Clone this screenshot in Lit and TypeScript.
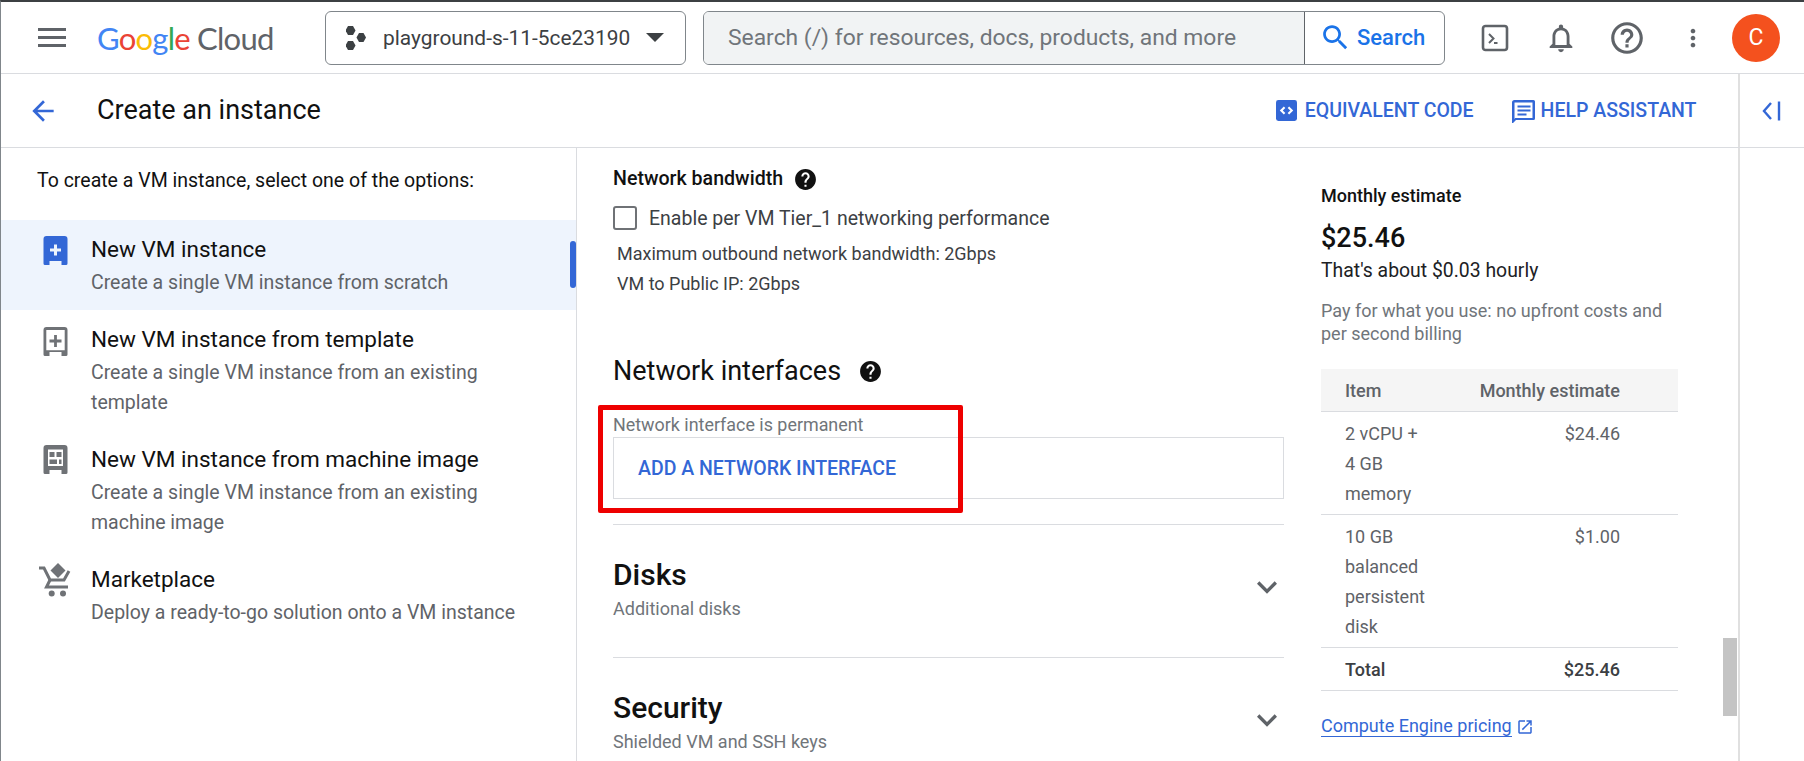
import { LitElement, html, css, svg } from "lit";
import { customElement } from "lit/decorators.js";

const icon = (d: string, size = 24) => html`<svg class="ico" width=${size} height=${size} viewBox="0 0 24 24" fill="currentColor"><path d=${d}></path></svg>`;

const HELP_FILLED = "M12 2C6.48 2 2 6.48 2 12s4.48 10 10 10 10-4.48 10-10S17.52 2 12 2zm1 17h-2v-2h2v2zm2.07-7.75l-.9.92C13.45 12.9 13 13.5 13 15h-2v-.5c0-1.1.45-2.1 1.17-2.83l1.24-1.26c.37-.36.59-.86.59-1.41 0-1.1-.9-2-2-2s-2 .9-2 2H8c0-2.21 1.79-4 4-4s4 1.79 4 4c0 .88-.36 1.68-.93 2.25z";
const CHEVRON = "M7.41 8.59L12 13.17l4.59-4.58L18 10l-6 6-6-6 1.41-1.41z";

// vm body shared by the three instance icons, legs at the bottom
const VM_BODY = "M3 0h18a3 3 0 0 1 3 3v24.500a1.500 1.500 0 0 1-1.500 1.500H18v-4H6v4H1.500A1.500 1.500 0 0 1 0 27.500V3a3 3 0 0 1 3-3z";
const vmFilled = svg`<g transform="translate(4.500 0)"><path fill-rule="evenodd" d="${VM_BODY}M10.500 8.500h3v4h4v3h-4v4h-3v-4h-4v-3h4z"></path></g>`;
const vmOutline = svg`<g transform="translate(4.500 0)"><path fill-rule="evenodd" d="${VM_BODY}M2.800 3v20.200h18.400V3zM10.600 8h2.800v4.600H18v2.800h-4.600V20h-2.800v-4.600H6v-2.800h4.600z"></path></g>`;
const vmImage = svg`<g transform="translate(4.500 0)"><path fill-rule="evenodd" d="${VM_BODY}M4.500 4.500v16.500h15V4.500z"></path><rect x="6" y="7" width="5" height="5"></rect><rect x="13" y="7" width="5" height="5"></rect><rect x="6" y="14.500" width="7.500" height="4.500"></rect><rect x="15.500" y="14.500" width="2.500" height="4.500"></rect></g>`;
const cart = svg`<path d="M19 0l7.500 7.500L19 15l-7.500-7.500z"></path><path d="M0 5h5l6 12h14l5-9" fill="none" stroke="currentColor" stroke-width="3"></path><path d="M11 17l-3.500 7H29" fill="none" stroke="currentColor" stroke-width="3"></path><circle cx="12.700" cy="30.500" r="3"></circle><circle cx="24" cy="30.500" r="3"></circle>`;

const OPTIONS = [
  { icon: vmFilled, title: "New VM instance", sub: ["Create a single VM instance from scratch"], active: true, top: 2 },
  { icon: vmOutline, title: "New VM instance from template", sub: ["Create a single VM instance from an existing", "template"], top: 3 },
  { icon: vmImage, title: "New VM instance from machine image", sub: ["Create a single VM instance from an existing", "machine image"], top: 1 },
  { icon: cart, title: "Marketplace", sub: ["Deploy a ready-to-go solution onto a VM instance"], top: -1 },
];

const COSTS = [
  { item: ["2 vCPU +", "4 GB", "memory"], price: "$24.46" },
  { item: ["10 GB", "balanced", "persistent", "disk"], price: "$1.00" },
];

@customElement("app-root")
export class AppRoot extends LitElement {
  static styles = css`
    :host {
      display: block;
      width: 1804px;
      height: 761px;
      overflow: hidden;
      background: #fff;
      font-family: Roboto, "Liberation Sans", sans-serif;
      color: #202124;
    }
    .page {
      height: 761px;
      box-sizing: border-box;
      border-left: 1.500px solid #80868b;
      border-top: 2px solid #3c4043;
      display: flex;
      flex-direction: column;
      overflow: hidden;
    }
    .ico { display: block; flex: none; }

    /* top bar */
    .topbar {
      height: 72px;
      flex: none;
      box-sizing: border-box;
      border-bottom: 1px solid #dadce0;
      display: flex;
      align-items: center;
      position: relative;
    }
    .menu { margin-left: 37px; color: #5f6368; }
    .logo {
      margin-left: 31px;
      width: 178px;
      font-family: Lato, sans-serif;
      font-size: 31px;
      letter-spacing: -0.750px;
      color: #5f6368;
      white-space: nowrap;
    }
    .logo .b { color: #4285f4; }
    .logo .r { color: #ea4335; }
    .logo .y { color: #fbbc05; }
    .logo .g { color: #34a853; }
    .project {
      margin-left: 50px;
      width: 361px;
      height: 54px;
      box-sizing: border-box;
      border: 1px solid #80868b;
      border-radius: 6px;
      display: flex;
      align-items: center;
      padding-left: 20px;
      font-size: 20.900px;
      color: #3c4043;
    }
    .project .name { margin-left: 17px; white-space: nowrap; }
    .caret {
      margin-left: 16px;
      width: 0;
      height: 0;
      border-left: 9px solid transparent;
      border-right: 9px solid transparent;
      border-top: 9px solid #3c4043;
    }
    .search {
      margin-left: 17px;
      width: 742px;
      height: 54px;
      box-sizing: border-box;
      border: 1px solid #80868b;
      border-radius: 6px;
      display: flex;
      overflow: hidden;
    }
    .search .input {
      width: 601px;
      background: #f1f3f4;
      border-right: 1px solid #5f6368;
      padding-left: 24px;
      box-sizing: border-box;
      display: flex;
      align-items: center;
      font-size: 22.850px;
      color: #70757a;
      white-space: nowrap;
    }
    .search .btn {
      flex: 1;
      display: flex;
      align-items: center;
      padding-left: 14px;
      gap: 5px;
      color: #1a73e8;
      font-size: 22px;
      font-weight: 500;
    }
    .tools { display: flex; align-items: center; margin-left: 36px; color: #5f6368; }
    .tools .ico { color: #5f6368; }
    .tools .bell { margin-left: 34.500px; }
    .tools .help { margin-left: 30.500px; }
    .tools .dots { margin-left: 33px; }
    .avatar {
      margin-left: 25px;
      width: 48px;
      height: 48px;
      border-radius: 50%;
      background: #f4511e;
      color: #fff;
      font-size: 23px;
      display: flex;
      align-items: center;
      justify-content: center;
    }

    /* title row */
    .titlebar {
      height: 74px;
      flex: none;
      box-sizing: border-box;
      border-bottom: 1px solid #dadce0;
      display: flex;
      align-items: center;
    }
    .titlemain {
      width: 1736.500px;
      display: flex;
      align-items: center;
      height: 100%;
      box-sizing: border-box;
    }
    .back { margin-left: 26px; color: #3367d6; }
    .titlemain h1 {
      margin: 0 0 2px 38px;
      font-size: 27px;
      font-weight: 400;
      color: #111;
    }
    .action {
      display: flex;
      align-items: center;
      color: #3367d6;
      font-size: 19.500px;
      font-weight: 500;
      white-space: nowrap;
    }
    .action.code { margin-left: auto; gap: 8px; }
    .action.assist { margin-left: 37px; margin-right: 41px; gap: 6px; }
    .collapse {
      flex: 1;
      align-self: stretch;
      border-left: 2.500px solid #e0e0e0;
      display: flex;
      align-items: center;
      justify-content: center;
      color: #3367d6;
    }

    /* body */
    .body { flex: 1; display: flex; min-height: 0; }
    .side {
      width: 576px;
      flex: none;
      box-sizing: border-box;
      border-right: 1px solid #dadce0;
    }
    .side .lead {
      margin: 0;
      padding: 22px 0 0 36px;
      height: 72px;
      box-sizing: border-box;
      font-size: 19.500px;
      line-height: 22px;
      color: #111;
    }
    .option {
      position: relative;
      display: flex;
      padding: 14px 0 12px 38px;
      gap: 19px;
    }
    .option.on { background: #eef4fd; }
    .option.on::after {
      content: "";
      position: absolute;
      right: 0;
      top: 21px;
      width: 6px;
      height: 47px;
      border-radius: 3px;
      background: #3367d6;
    }
    .option .glyph { color: #6f7276; flex: none; display: block; overflow: visible; }
    .option.on .glyph { color: #3367d6; }
    .option .t { font-size: 22.500px; line-height: 30px; color: #111; white-space: nowrap; }
    .option .s { font-size: 19.500px; line-height: 30px; color: #5f6368; margin-top: 4px; }
    .option .s div { white-space: nowrap; }

    .main {
      width: 708px;
      flex: none;
      box-sizing: border-box;
      padding: 19px 0 0 36px;
      position: relative;
    }
    .bw-head { display: flex; align-items: center; gap: 10px; font-size: 19.600px; font-weight: 500; line-height: 24px; height: 24px; color: #111; }
    .bw-head .ico, .ni-head .ico { color: #111; }
    .check { display: flex; align-items: center; gap: 12px; margin-top: 15px; font-size: 19.500px; color: #3c4043; }
    .box { width: 24px; height: 24px; box-sizing: border-box; border: 2.500px solid #6f7276; border-radius: 3px; }
    .bw-lines { margin: 9px 0 0 4px; font-size: 18px; line-height: 30px; color: #3c4043; }
    .ni-head { display: flex; align-items: center; gap: 17px; margin-top: 55px; font-size: 27px; font-weight: 400; line-height: 34px; color: #111; }
    .ni-note { margin-top: 26px; font-size: 17.900px; line-height: 22px; color: #70757a; height: 23px; }
    .ni-box {
      width: 671px;
      height: 62px;
      box-sizing: border-box;
      border: 1px solid #dadce0;
      display: flex;
      align-items: center;
      padding-left: 24px;
      font-size: 19.500px;
      font-weight: 500;
      color: #3367d6;
    }
    .annot {
      position: absolute;
      left: 21px;
      top: 257px;
      width: 365px;
      height: 108px;
      box-sizing: border-box;
      border: 5px solid #ee0000;
      border-radius: 2px;
    }
    .section {
      width: 671px;
      box-sizing: border-box;
      border-top: 1px solid #dadce0;
      height: 133px;
      display: flex;
      align-items: flex-start;
      justify-content: space-between;
      padding-top: 32px;
    }
    .ni-box + .section { margin-top: 24.500px; }
    .section h2 { margin: 0; font-size: 30px; font-weight: 500; line-height: 36px; color: #111; }
    .section p { margin: 4px 0 0; font-size: 18px; line-height: 24px; color: #70757a; }
    .section .ico { color: #5f6368; margin-top: 10px; margin-right: -3px; }

    .estimate {
      width: 455px;
      flex: none;
      box-sizing: border-box;
      padding: 38px 0 0 36px;
      position: relative;
      border-right: 2.500px solid #e0e0e0;
    }
    .est-label { font-size: 18px; line-height: 20px; font-weight: 500; color: #111; }
    .est-total { margin-top: 15px; font-size: 27px; line-height: 34px; font-weight: 500; color: #111; }
    .est-hourly { margin-top: 1px; font-size: 19.400px; line-height: 30px; color: #202124; }
    .est-note { margin-top: 12.500px; font-size: 18px; line-height: 23px; color: #70757a; width: 357px; }
    table { margin-top: 24.500px; width: 357px; border-collapse: collapse; font-size: 18px; color: #5f6368; }
    th { height: 42px; padding: 0; background: #f5f5f5; font-weight: 500; text-align: left; border-bottom: 1px solid #dadce0; }
    td { padding: 7px 0 5px; line-height: 30px; vertical-align: top; border-bottom: 1px solid #dadce0; }
    .first { padding-left: 24px; width: 110px; }
    .num { text-align: right; padding-right: 58px; white-space: nowrap; }
    tr.total td { font-weight: 500; color: #3c4043; padding: 7px 0 5px; }
    tr.total td.first { padding-left: 24px; }
    tr.total td.num { padding-right: 58px; }
    .pricing {
      display: inline-flex;
      align-items: center;
      gap: 4px;
      margin-top: 25px;
      color: #3367d6;
      font-size: 18px;
    }
    .pricing span { border-bottom: 1px solid #3367d6; line-height: 20px; }
    .thumb {
      position: absolute;
      right: 1px;
      top: 490px;
      width: 14px;
      height: 78px;
      background: #c4c4c4;
    }
  `;

  render() {
    return html`
      <div class="page">
        <header class="topbar">
          <span class="menu">
            <svg class="ico" width="28" height="20" viewBox="0 0 28 20" fill="currentColor"><path d="M0 0h28v3H0zM0 8h28v3H0zM0 16h28v3H0z"></path></svg>
          </span>
          <div class="logo"><span class="b">G</span><span class="r">o</span><span class="y">o</span><span class="b">g</span><span class="g">l</span><span class="r">e</span> Cloud</div>
          <div class="project">
            <svg class="ico" width="20" height="26" viewBox="0 0 20 26" fill="currentColor">
              <polygon points="2,1 7,1 9.500,5.500 7,10 2,10 -0.500,5.500"></polygon>
              <polygon points="13,8 17.500,8 20,12.500 17.500,17 13,17 10.500,12.500"></polygon>
              <polygon points="2,16 7,16 9.500,20.500 7,25 2,25 -0.500,20.500"></polygon>
            </svg>
            <span class="name">playground-s-11-5ce23190</span>
            <span class="caret"></span>
          </div>
          <div class="search">
            <div class="input">Search (/) for resources, docs, products, and more</div>
            <div class="btn">
              ${icon("M15.500 14h-.79l-.28-.27C15.410 12.590 16 11.110 16 9.500 16 5.910 13.090 3 9.500 3S3 5.910 3 9.500 5.910 16 9.500 16c1.610 0 3.090-.59 4.230-1.570l.27.28v.79l5 4.990L20.490 19l-4.990-5zm-6 0C7.010 14 5 11.990 5 9.500S7.010 5 9.500 5 14 7.010 14 9.500 11.990 14 9.500 14z", 33)}
              <span>Search</span>
            </div>
          </div>
          <div class="tools">
            <svg class="ico" width="28" height="28" viewBox="0 0 28 28">
              <rect x="2" y="2" width="24" height="24" rx="2.500" fill="none" stroke="currentColor" stroke-width="2.600"></rect>
              <path d="M8 10l4.500 4.500L8 19" fill="none" stroke="currentColor" stroke-width="2"></path>
              <rect x="13" y="18" width="3.500" height="2" fill="currentColor"></rect>
            </svg>
            <span class="bell">${icon("M12 22c1.100 0 2-.9 2-2h-4c0 1.100.9 2 2 2zm6-6v-5c0-3.070-1.630-5.640-4.500-6.320V4c0-.83-.67-1.500-1.500-1.500s-1.500.67-1.500 1.500v.68C7.640 5.360 6 7.920 6 11v5l-2 2v1h16v-1l-2-2zm-2 1H8v-6c0-2.480 1.510-4.500 4-4.500s4 2.020 4 4.500v6z", 34)}</span>
            <span class="help">${icon("M11 18h2v-2h-2v2zm1-16C6.480 2 2 6.480 2 12s4.480 10 10 10 10-4.480 10-10S17.520 2 12 2zm0 18c-4.410 0-8-3.590-8-8s3.590-8 8-8 8 3.590 8 8-3.590 8-8 8zm0-14c-2.210 0-4 1.790-4 4h2c0-1.100.9-2 2-2s2 .9 2 2c0 2-3 1.750-3 5h2c0-2.250 3-2.500 3-5 0-2.210-1.790-4-4-4z", 38)}</span>
            <span class="dots">${icon("M12 8c1.100 0 2-.9 2-2s-.9-2-2-2-2 .9-2 2 .9 2 2 2zm0 2c-1.100 0-2 .9-2 2s.9 2 2 2 2-.9 2-2-.9-2-2-2zm0 6c-1.100 0-2 .9-2 2s.9 2 2 2 2-.9 2-2-.9-2-2-2z", 28)}</span>
            <div class="avatar">C</div>
          </div>
        </header>

        <div class="titlebar">
          <div class="titlemain">
            <span class="back">${icon("M20 11H7.830l5.590-5.590L12 4l-8 8 8 8 1.410-1.410L7.830 13H20v-2z", 32)}</span>
            <h1>Create an instance</h1>
            <div class="action code">
              <svg class="ico" width="21" height="21" viewBox="0 0 22 22">
                <rect width="22" height="22" rx="2.500" fill="currentColor"></rect>
                <path d="M9 7.500L5.500 11 9 14.500M13 7.500l3.500 3.500-3.500 3.500" fill="none" stroke="#fff" stroke-width="2.200"></path>
              </svg>
              <span>EQUIVALENT CODE</span>
            </div>
            <div class="action assist">
              <svg class="ico" width="24" height="24" viewBox="0 0 24 24" fill="currentColor">
                <path fill-rule="evenodd" d="M3.500 1h19a1.500 1.500 0 0 1 1.500 1.500v17a1.500 1.500 0 0 1-1.500 1.500H5l-4 4V3.500A2.500 2.500 0 0 1 3.500 1zM3.500 3.500v16.400l.7-.9h17.300V3.500zM6.500 6.500h13v2h-13zM6.500 10.500h13v2h-13zM6.500 14.500h9v2h-9z"></path>
              </svg>
              <span>HELP ASSISTANT</span>
            </div>
          </div>
          <div class="collapse">
            <svg class="ico" width="22" height="24" viewBox="0 0 22 24" fill="none" stroke="currentColor" stroke-width="2.400">
              <path d="M10 4l-7 8 7 8"></path><path d="M18 2.500v19"></path>
            </svg>
          </div>
        </div>

        <div class="body">
          <aside class="side">
            <p class="lead">To create a VM instance, select one of the options:</p>
            ${OPTIONS.map(o => html`
              <div class="option ${o.active ? "on" : ""}">
                <svg class="glyph" style="margin-top:${o.top}px" width="33" height="34" viewBox="0 0 33 34" fill="currentColor">${o.icon}</svg>
                <div>
                  <div class="t">${o.title}</div>
                  <div class="s">${o.sub.map(l => html`<div>${l}</div>`)}</div>
                </div>
              </div>`)}
          </aside>

          <main class="main">
            <div class="bw-head"><span>Network bandwidth</span>${icon(HELP_FILLED, 25)}</div>
            <label class="check"><span class="box"></span><span>Enable per VM Tier_1 networking performance</span></label>
            <div class="bw-lines">
              <div>Maximum outbound network bandwidth: 2Gbps</div>
              <div>VM to Public IP: 2Gbps</div>
            </div>
            <div class="ni-head"><span>Network interfaces</span>${icon(HELP_FILLED, 25)}</div>
            <div class="ni-note">Network interface is permanent</div>
            <div class="ni-box">ADD A NETWORK INTERFACE</div>
            <section class="section">
              <div><h2>Disks</h2><p>Additional disks</p></div>
              ${icon(CHEVRON, 40)}
            </section>
            <section class="section">
              <div><h2>Security</h2><p>Shielded VM and SSH keys</p></div>
              ${icon(CHEVRON, 40)}
            </section>
            <div class="annot"></div>
          </main>

          <aside class="estimate">
            <div class="est-label">Monthly estimate</div>
            <div class="est-total">$25.46</div>
            <div class="est-hourly">That's about $0.03 hourly</div>
            <div class="est-note">Pay for what you use: no upfront costs and per second billing</div>
            <table>
              <tr><th class="first">Item</th><th class="num">Monthly estimate</th></tr>
              ${COSTS.map(c => html`<tr>
                <td class="first">${c.item.map(l => html`<div>${l}</div>`)}</td>
                <td class="num">${c.price}</td>
              </tr>`)}
              <tr class="total"><td class="first">Total</td><td class="num">$25.46</td></tr>
            </table>
            <div class="pricing"><span>Compute Engine pricing</span>
              ${icon("M19 19H5V5h7V3H5c-1.110 0-2 .9-2 2v14c0 1.100.89 2 2 2h14c1.100 0 2-.9 2-2v-7h-2v7zM14 3v2h3.590l-9.830 9.830 1.410 1.410L19 6.410V10h2V3h-7z", 18)}
            </div>
            <div class="thumb"></div>
          </aside>
        </div>
      </div>
    `;
  }
}

declare global {
  interface HTMLElementTagNameMap { "app-root": AppRoot; }
}
